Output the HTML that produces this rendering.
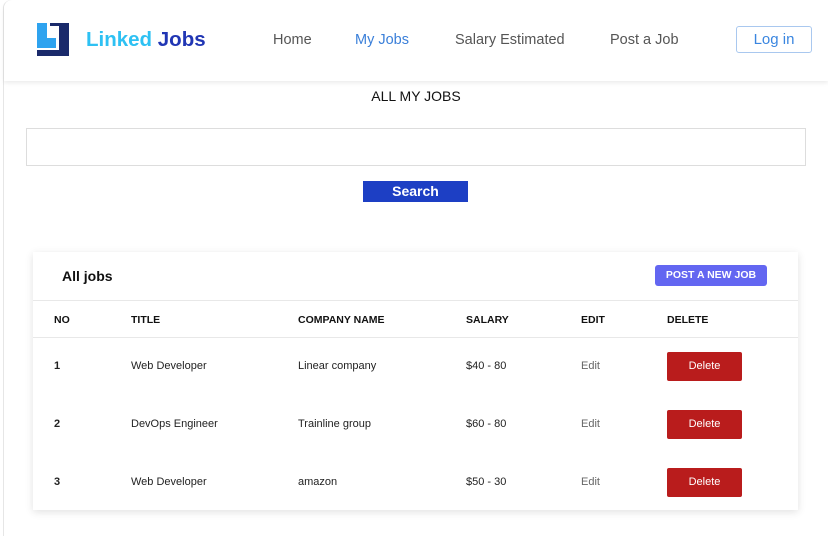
<!DOCTYPE html>
<html><head><style>
*{margin:0;padding:0;box-sizing:border-box}
body{width:828px;height:536px;background:#fff;font-family:"Liberation Sans",sans-serif;position:relative;overflow:hidden}
.frame{position:absolute;left:3px;top:0;right:0;bottom:0;border-left:1px solid #e6e6e6;border-top:1px solid #eee;border-radius:8px 0 0 0}
.hdr{position:absolute;left:4px;top:0;right:0;height:81px;background:#fff;box-shadow:0 2px 4px rgba(0,0,0,.08);border-radius:8px 0 0 0}
.brand{position:absolute;left:82px;top:28px;font-size:20.5px;font-weight:bold}
.nav{position:absolute;top:32px;font-size:14.5px;color:#555}
.login{position:absolute;left:732px;top:26px;width:76px;height:27px;border:1px solid #a9c8ef;border-radius:3px;color:#3a86e0;font-size:15px;text-align:center;line-height:25px}
.t{position:absolute;font-size:13px;color:#111}
.card{position:absolute;left:33px;top:252px;width:765px;height:258px;background:#fff;box-shadow:0 2px 8px rgba(0,0,0,.12)}
.hl{position:absolute;left:0;right:0;height:1px;background:#e8e8e8}
.th{position:absolute;top:62px;font-size:10.5px;font-weight:bold;color:#111}
.td{position:absolute;font-size:11px;color:#222}
.del{position:absolute;left:634px;width:75px;height:29px;background:#b91c1c;color:#fff;font-size:11px;text-align:center;line-height:29px;border-radius:2px}
</style></head><body>
<div class="frame"></div>
<div class="hdr">
<svg style="position:absolute;left:29px;top:23px" width="37" height="33" viewBox="0 0 37 33">
<rect x="4" y="0" width="10" height="25" fill="#2ea3ef"/><rect x="4" y="15" width="19" height="10" fill="#2ea3ef"/>
<rect x="17" y="0" width="19" height="3" fill="#1a2a6b"/><rect x="26" y="3" width="10" height="30" fill="#1a2a6b"/><rect x="4" y="27" width="32" height="6" fill="#1a2a6b"/>
</svg>
<div class="brand"><span style="color:#2ec1f3">Linked</span> <span style="color:#2136b4">Jobs</span></div>
<div class="nav" style="left:269px">Home</div>
<div class="nav" style="left:351px;color:#3a7fd9">My Jobs</div>
<div class="nav" style="left:451px">Salary Estimated</div>
<div class="nav" style="left:606px">Post a Job</div>
<div class="login">Log in</div>
</div>
<div class="t" style="left:0;width:832px;text-align:center;top:88px;font-size:14px">ALL MY JOBS</div>
<div style="position:absolute;left:26px;top:128px;width:780px;height:38px;border:1px solid #ddd"></div>
<div style="position:absolute;left:363px;top:181px;width:105px;height:21px;background:#1d3fc4;color:#fff;font-weight:bold;font-size:14px;text-align:center;line-height:21px">Search</div>
<div class="card">
<div style="position:absolute;left:29px;top:16px;font-size:14px;font-weight:bold;color:#111">All jobs</div>
<div style="position:absolute;left:622px;top:13px;width:112px;height:21px;background:#6366f1;border-radius:3px;color:#fff;font-size:10.5px;font-weight:bold;text-align:center;line-height:21px">POST A NEW JOB</div>
<div class="hl" style="top:48px"></div><div class="hl" style="top:85px"></div>
<div class="th" style="left:21px">NO</div><div class="th" style="left:98px">TITLE</div><div class="th" style="left:265px">COMPANY NAME</div><div class="th" style="left:433px">SALARY</div><div class="th" style="left:548px">EDIT</div><div class="th" style="left:634px">DELETE</div>
<div class="td" style="left:21px;top:108px;font-weight:bold">1</div><div class="td" style="left:98px;top:108px">Web Developer</div><div class="td" style="left:265px;top:108px">Linear company</div><div class="td" style="left:433px;top:108px">$40 - 80</div><div class="td" style="left:548px;top:108px;color:#666">Edit</div><div class="del" style="top:100px">Delete</div>
<div class="td" style="left:21px;top:166px;font-weight:bold">2</div><div class="td" style="left:98px;top:166px">DevOps Engineer</div><div class="td" style="left:265px;top:166px">Trainline group</div><div class="td" style="left:433px;top:166px">$60 - 80</div><div class="td" style="left:548px;top:166px;color:#666">Edit</div><div class="del" style="top:158px">Delete</div>
<div class="td" style="left:21px;top:224px;font-weight:bold">3</div><div class="td" style="left:98px;top:224px">Web Developer</div><div class="td" style="left:265px;top:224px">amazon</div><div class="td" style="left:433px;top:224px">$50 - 30</div><div class="td" style="left:548px;top:224px;color:#666">Edit</div><div class="del" style="top:216px">Delete</div>
</div>
</body></html>
